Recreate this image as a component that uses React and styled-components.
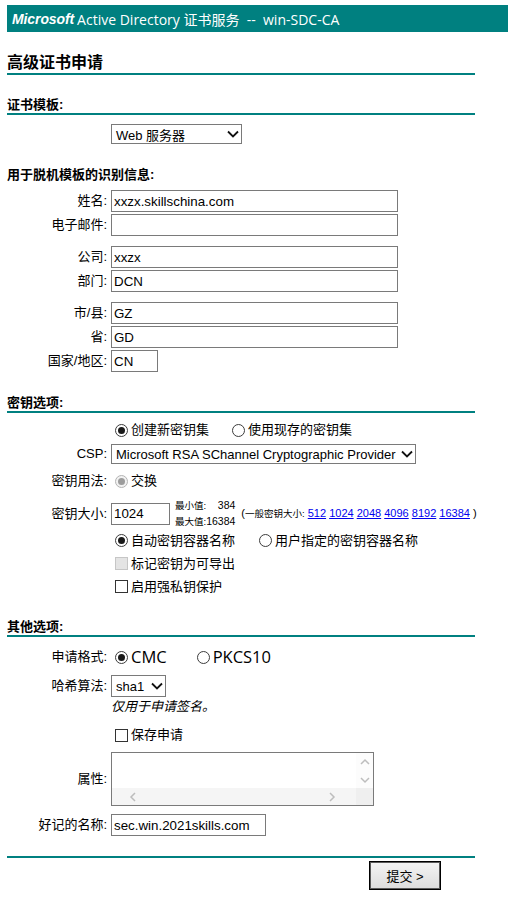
import React from 'react';
import styled, { createGlobalStyle } from 'styled-components';

const TEAL = '#008080';
const CJK = '"Noto Sans CJK SC", sans-serif';
const BASE = `"Liberation Sans", ${CJK}`;

const GlobalStyle = createGlobalStyle`
  html, body { margin: 0; padding: 0; background: #fff; }
  body { font-family: ${BASE}; font-size: 13px; color: #000; }
`;

const Page = styled.div`
  padding: 5px 0 0 7px;
`;

const Header = styled.div`
  height: 27px;
  background: ${TEAL};
  color: #fff;
  display: flex;
  align-items: center;
  padding-left: 5px;
  font-family: "Open Sans", ${CJK};
  font-size: 14px;
  white-space: pre;
`;

const Brand = styled.span`
  font-family: "Liberation Sans", sans-serif;
  font-weight: bold;
  font-style: italic;
  font-size: 14px;
  letter-spacing: -0.1px;
  margin-right: 3px;
`;

const Main = styled.div`
  width: 468px;
`;

const Title = styled.h1`
  margin: 21px 0 0;
  height: 20px;
  font-size: 16px;
  font-weight: bold;
  line-height: 20px;
  border-bottom: 2px solid ${TEAL};
`;

const SectionHead = styled.h2`
  margin: ${(p) => p.$mt}px 0 0;
  height: 16px;
  font-size: 13px;
  font-weight: bold;
  line-height: 16px;
  border-bottom: ${(p) => (p.$ruled ? `2px solid ${TEAL}` : 'none')};
`;

const FieldRow = styled.div`
  display: grid;
  grid-template-columns: 100px auto;
  column-gap: 4px;
  align-items: center;
  height: ${(p) => p.$h}px;
  margin-top: ${(p) => p.$mt}px;
`;

const Label = styled.span`
  text-align: right;
  white-space: nowrap;
  line-height: 16px;
`;

const Field = styled.div`
  display: flex;
  align-items: center;
  white-space: nowrap;
  & > * {
    flex: none;
  }
`;

const TextInput = styled.input`
  width: ${(p) => p.$w}px;
  height: 22px;
  box-sizing: border-box;
  margin: 0;
  padding: 0 2px;
  border: 1px solid #7a7a7a;
  border-radius: 0;
  background: #fff;
  color: #000;
  font-family: ${BASE};
  font-size: 13.33px;
  outline: none;
`;

const SelectBox = styled.div`
  width: ${(p) => p.$w}px;
  height: ${(p) => p.$h}px;
  box-sizing: border-box;
  border: 1px solid #7a7a7a;
  background: #fff;
  display: flex;
  align-items: center;
  justify-content: space-between;
  padding: 0 2px 0 4px;
  font-size: 13px;
  white-space: nowrap;
`;

const Chevron = () => (
  <svg width="12" height="8" viewBox="0 0 12 8">
    <path d="M1 1.5 L6 6.5 L11 1.5" fill="none" stroke="#111" strokeWidth="1.8" />
  </svg>
);

const OptionGroup = styled.div`
  display: flex;
  align-items: center;
  gap: ${(p) => p.$gap}px;
  padding-left: 4px;
`;

const Option = styled.label`
  display: flex;
  align-items: center;
  gap: 3px;
  font-family: ${(p) => (p.$big ? `"Open Sans", ${CJK}` : BASE)};
  font-size: ${(p) => (p.$big ? 16.5 : 13)}px;
  line-height: 18px;
  white-space: nowrap;
`;

const RadioMark = styled.span`
  flex: none;
  width: 13px;
  height: 13px;
  box-sizing: border-box;
  border-radius: 50%;
  border: 1px solid ${(p) => (p.$disabled ? '#b4b4b4' : '#3c3c3c')};
  background: ${(p) => (p.$disabled ? '#f2f2f2' : '#fff')};
  display: flex;
  align-items: center;
  justify-content: center;
  &::after {
    content: '';
    display: ${(p) => (p.$checked ? 'block' : 'none')};
    width: 7px;
    height: 7px;
    border-radius: 50%;
    background: ${(p) => (p.$disabled ? '#9c9c9c' : '#1a1a1a')};
  }
`;

const CheckMark = styled.span`
  flex: none;
  width: 13px;
  height: 13px;
  box-sizing: border-box;
  border: 1px solid ${(p) => (p.$disabled ? '#c6c6c6' : '#333')};
  background: ${(p) => (p.$disabled ? '#e4e4e4' : '#fff')};
`;

const Limits = styled.div`
  display: grid;
  grid-template-columns: auto auto;
  margin-left: 5px;
  font-size: 10.5px;
  line-height: 15.5px;
  white-space: nowrap;
`;

const LimitLabel = styled.span`
  font-size: 9.5px;
`;

const LimitValue = styled.span`
  text-align: right;
`;

const Notice = styled.span`
  margin-left: 6px;
  font-size: 11px;
  white-space: nowrap;
  line-height: 16px;
`;

const NoticeCjk = styled.span`
  font-size: 9.5px;
`;

const SizeLink = styled.a`
  color: #0000ee;
  text-decoration: underline;
`;

const Hint = styled.span`
  font-style: italic;
  line-height: 16px;
`;

const AreaBox = styled.div`
  width: 263px;
  height: 54px;
  box-sizing: border-box;
  border: 1px solid #7a7a7a;
  display: grid;
  grid-template-columns: 1fr 17px;
  grid-template-rows: 1fr 17px;
  background: #fff;
`;

const VScroll = styled.div`
  display: flex;
  flex-direction: column;
  align-items: center;
  justify-content: space-between;
  padding: 5px 0 4px;
  background: #fcfcfc;
`;

const HScroll = styled.div`
  display: flex;
  align-items: center;
  justify-content: space-between;
  padding: 0 20px 0 17px;
  background: #f5f5f5;
`;

const Corner = styled.div`
  background: #efefef;
`;

const Arrow = ({ d, w = 10, h = 7 }) => (
  <svg width={w} height={h} viewBox={`0 0 ${w} ${h}`}>
    <path d={d} fill="none" stroke="#bdbdbd" strokeWidth="1.5" />
  </svg>
);

const Divider = styled.div`
  margin-top: 20px;
  width: 468px;
  border-top: 2px solid ${TEAL};
`;

const ButtonRow = styled.div`
  margin-top: 3px;
  padding-left: 362px;
  padding-bottom: 20px;
`;

const SubmitButton = styled.button`
  width: 72px;
  height: 29px;
  margin: 0;
  padding: 0;
  border: 1px solid #000;
  box-shadow: inset 0 0 0 1px #5a5a5a;
  border-radius: 0;
  background: linear-gradient(#f4f4f4, #dcdcdc);
  color: #000;
  font-family: ${BASE};
  font-size: 13px;
`;

const Radio = ({ checked, disabled, big, children }) => (
  <Option $big={big}>
    <RadioMark $checked={checked} $disabled={disabled} />
    {children}
  </Option>
);

const Check = ({ disabled, children }) => (
  <Option>
    <CheckMark $disabled={disabled} />
    {children}
  </Option>
);

export default function App() {
  return (
    <>
      <GlobalStyle />
      <Page>
        <Header>
          <Brand>Microsoft</Brand>
          {'Active Directory 证书服务  --  win-SDC-CA'}
        </Header>
        <Main>
          <Title>高级证书申请</Title>

          <SectionHead $mt={22} $ruled>证书模板:</SectionHead>
          <FieldRow $mt={9} $h={20}>
            <Label />
            <Field>
              <SelectBox $w={131} $h={20}>
                <span>Web 服务器</span>
                <Chevron />
              </SelectBox>
            </Field>
          </FieldRow>

          <SectionHead $mt={23}>用于脱机模板的识别信息:</SectionHead>
          <FieldRow $mt={7} $h={22}>
            <Label>姓名:</Label>
            <Field><TextInput $w={287} readOnly defaultValue="xxzx.skillschina.com" /></Field>
          </FieldRow>
          <FieldRow $mt={2} $h={22}>
            <Label>电子邮件:</Label>
            <Field><TextInput $w={287} readOnly defaultValue="" /></Field>
          </FieldRow>
          <FieldRow $mt={10} $h={22}>
            <Label>公司:</Label>
            <Field><TextInput $w={287} readOnly defaultValue="xxzx" /></Field>
          </FieldRow>
          <FieldRow $mt={2} $h={22}>
            <Label>部门:</Label>
            <Field><TextInput $w={287} readOnly defaultValue="DCN" /></Field>
          </FieldRow>
          <FieldRow $mt={10} $h={22}>
            <Label>市/县:</Label>
            <Field><TextInput $w={287} readOnly defaultValue="GZ" /></Field>
          </FieldRow>
          <FieldRow $mt={2} $h={22}>
            <Label>省:</Label>
            <Field><TextInput $w={287} readOnly defaultValue="GD" /></Field>
          </FieldRow>
          <FieldRow $mt={2} $h={22}>
            <Label>国家/地区:</Label>
            <Field><TextInput $w={47} readOnly defaultValue="CN" /></Field>
          </FieldRow>

          <SectionHead $mt={23} $ruled>密钥选项:</SectionHead>
          <FieldRow $mt={6} $h={22}>
            <Label />
            <Field>
              <OptionGroup $gap={23}>
                <Radio checked>创建新密钥集</Radio>
                <Radio>使用现存的密钥集</Radio>
              </OptionGroup>
            </Field>
          </FieldRow>
          <FieldRow $mt={3} $h={20}>
            <Label>CSP:</Label>
            <Field>
              <SelectBox $w={305} $h={20}>
                <span>Microsoft RSA SChannel Cryptographic Provider</span>
                <Chevron />
              </SelectBox>
            </Field>
          </FieldRow>
          <FieldRow $mt={6} $h={22}>
            <Label>密钥用法:</Label>
            <Field>
              <OptionGroup $gap={23}>
                <Radio checked disabled>交换</Radio>
              </OptionGroup>
            </Field>
          </FieldRow>
          <FieldRow $mt={6} $h={22}>
            <Label>密钥大小:</Label>
            <Field>
              <TextInput $w={59} readOnly defaultValue="1024" />
              <Limits>
                <LimitLabel>最小值:</LimitLabel>
                <LimitValue>384</LimitValue>
                <LimitLabel>最大值:</LimitLabel>
                <LimitValue>16384</LimitValue>
              </Limits>
              <Notice>
                (<NoticeCjk>一般密钥大小:</NoticeCjk>{' '}
                <SizeLink href="#">512</SizeLink>{' '}
                <SizeLink href="#">1024</SizeLink>{' '}
                <SizeLink href="#">2048</SizeLink>{' '}
                <SizeLink href="#">4096</SizeLink>{' '}
                <SizeLink href="#">8192</SizeLink>{' '}
                <SizeLink href="#">16384</SizeLink>{' )'}
              </Notice>
            </Field>
          </FieldRow>
          <FieldRow $mt={9} $h={23}>
            <Label />
            <Field>
              <OptionGroup $gap={24}>
                <Radio checked>自动密钥容器名称</Radio>
                <Radio>用户指定的密钥容器名称</Radio>
              </OptionGroup>
            </Field>
          </FieldRow>
          <FieldRow $mt={0} $h={23}>
            <Label />
            <Field>
              <OptionGroup $gap={0}>
                <Check disabled>标记密钥为可导出</Check>
              </OptionGroup>
            </Field>
          </FieldRow>
          <FieldRow $mt={0} $h={23}>
            <Label />
            <Field>
              <OptionGroup $gap={0}>
                <Check>启用强私钥保护</Check>
              </OptionGroup>
            </Field>
          </FieldRow>

          <SectionHead $mt={21} $ruled>其他选项:</SectionHead>
          <FieldRow $mt={9} $h={22}>
            <Label>申请格式:</Label>
            <Field>
              <OptionGroup $gap={30}>
                <Radio checked big>CMC</Radio>
                <Radio big>PKCS10</Radio>
              </OptionGroup>
            </Field>
          </FieldRow>
          <FieldRow $mt={7} $h={22}>
            <Label>哈希算法:</Label>
            <Field>
              <SelectBox $w={55} $h={22}>
                <span>sha1</span>
                <Chevron />
              </SelectBox>
            </Field>
          </FieldRow>
          <FieldRow $mt={2} $h={16}>
            <Label />
            <Field><Hint>仅用于申请签名。</Hint></Field>
          </FieldRow>
          <FieldRow $mt={9} $h={22}>
            <Label />
            <Field>
              <OptionGroup $gap={0}>
                <Check>保存申请</Check>
              </OptionGroup>
            </Field>
          </FieldRow>
          <FieldRow $mt={6} $h={54}>
            <Label>属性:</Label>
            <Field>
              <AreaBox>
                <div />
                <VScroll>
                  <Arrow d="M1 6 L5 2 L9 6" />
                  <Arrow d="M1 1 L5 5 L9 1" />
                </VScroll>
                <HScroll>
                  <Arrow w={7} h={10} d="M6 1 L2 5 L6 9" />
                  <Arrow w={7} h={10} d="M1 1 L5 5 L1 9" />
                </HScroll>
                <Corner />
              </AreaBox>
            </Field>
          </FieldRow>
          <FieldRow $mt={8} $h={22}>
            <Label>好记的名称:</Label>
            <Field><TextInput $w={155} readOnly defaultValue="sec.win.2021skills.com" /></Field>
          </FieldRow>

          <Divider />
          <ButtonRow>
            <SubmitButton type="button">提交 &gt;</SubmitButton>
          </ButtonRow>
        </Main>
      </Page>
    </>
  );
}
